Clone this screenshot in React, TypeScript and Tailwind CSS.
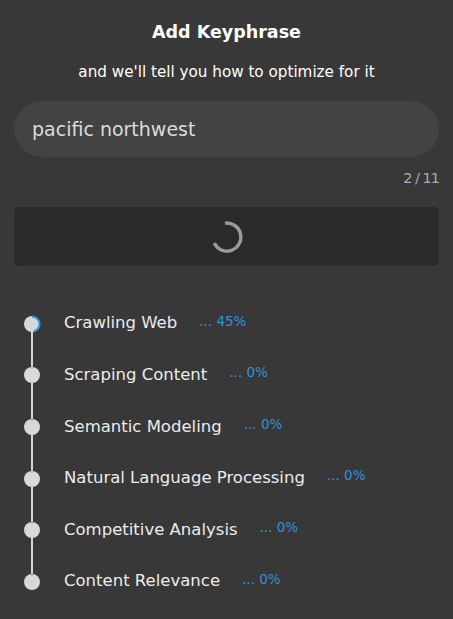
import React from "react";

const steps = [
  { name: "Crawling Web", pct: 45 },
  { name: "Scraping Content", pct: 0 },
  { name: "Semantic Modeling", pct: 0 },
  { name: "Natural Language Processing", pct: 0 },
  { name: "Competitive Analysis", pct: 0 },
  { name: "Content Relevance", pct: 0 },
];

function Spinner() {
  return (
    <svg width="34" height="34" viewBox="0 0 34 34">
      <path
        d="M 15 3.2 A 14 14 0 1 1 4.2 23"
        fill="none"
        stroke="#9a9a9a"
        strokeWidth="3.4"
      />
    </svg>
  );
}

function Dot({ pct }: { pct: number }) {
  const r = 8;
  const c = 2 * Math.PI * (r - 0.5);
  return (
    <svg width="18" height="18" viewBox="0 0 18 18" className="relative z-10">
      <circle cx="9" cy="9" r="8" fill="#d6d8db" />
      {pct > 0 ? (
        <circle
          cx="9"
          cy="9"
          r={r - 0.5}
          fill="none"
          stroke="#2d8fe0"
          strokeWidth="2"
          strokeDasharray={`${(c * pct) / 100} ${c}`}
          transform="rotate(-90 9 9)"
        />
      ) : (
        <rect x="8.5" y="0.5" width="1" height="2" fill="#2d8fe0" />
      )}
    </svg>
  );
}

export default function App() {
  return (
    <div
      className="w-[453px] h-[619px] bg-[#383838] px-[14px] flex flex-col overflow-hidden"
      style={{ fontFamily: "'DejaVu Sans', 'Open Sans', sans-serif" }}
    >
      <h1 className="text-center text-white font-bold text-[17.5px] mt-[20px] leading-[24px]">
        Add Keyphrase
      </h1>
      <p className="text-center text-white text-[15.2px] mt-[18px] leading-[20px]">
        and we'll tell you how to optimize for it
      </p>
      <div className="mt-[19px] h-[56px] rounded-full bg-[#434343] flex items-center px-[18px]">
        <span className="text-[19px] text-[#dcdcdc]">pacific northwest</span>
      </div>
      <div className="text-right text-[14.5px] text-[#a7abb3] mt-[11px] leading-[20px] tracking-[-1px]">
        2 / 11
      </div>
      <div className="mt-[19px] h-[59px] rounded-[5px] bg-[#2a2a2a] flex items-center justify-center">
        <Spinner />
      </div>
      <div className="relative mt-[32px] ml-[9px]">
        <div className="absolute left-[8px] top-[26px] bottom-[26px] w-[2px] bg-[#d6d8db]" />
        {steps.map((s) => (
          <div key={s.name} className="flex items-center h-[51.6px]">
            <Dot pct={s.pct} />
            <span className="ml-[23px] text-[16.5px] text-[#ececec]">{s.name}</span>
            <span className="ml-[22px] text-[13.5px] text-[#3490dc] -mt-[6px]">
              ... {s.pct}%
            </span>
          </div>
        ))}
      </div>
    </div>
  );
}
